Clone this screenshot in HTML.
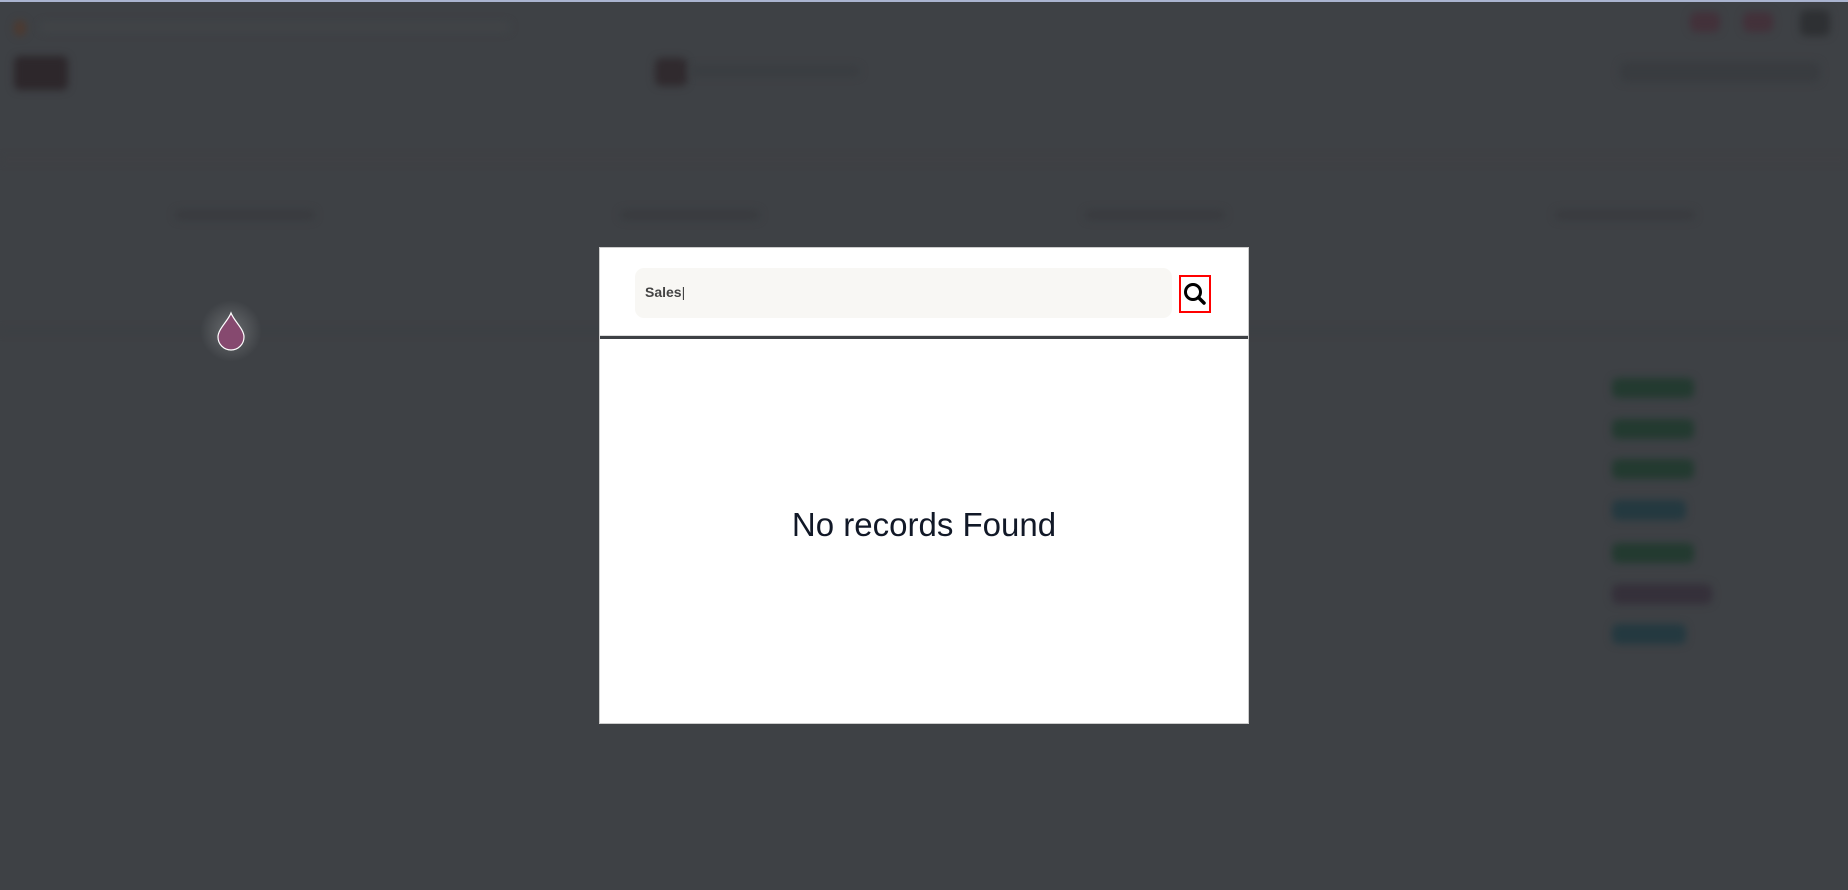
<!DOCTYPE html>
<html><head><meta charset="utf-8"><style>
*{margin:0;padding:0;box-sizing:border-box}
html,body{width:1848px;height:890px;overflow:hidden;background:#3e4145;font-family:"Liberation Sans",sans-serif;position:relative}
.topline{position:absolute;left:0;top:0;width:1848px;height:2px;background:#aab4d0}
.b{position:absolute;filter:blur(4px);border-radius:6px}
.modal{position:absolute;left:599px;top:247px;width:650px;height:477px;background:#fff;border:1px solid #ccc}
.hdr{position:absolute;left:0;top:0;width:648px;height:88px;border-bottom:1px solid #ddd}
.sep{position:absolute;left:0;top:88px;width:648px;height:3px;background:#3e4145}
.inp{position:absolute;left:35px;top:20px;width:537px;height:50px;background:#f8f7f4;border-radius:9px;font-weight:bold;font-size:14px;color:#444;padding:16px 0 0 10px}
.sb{position:absolute;left:579px;top:27px;width:32px;height:38px;border:2px solid #f00}
.msg{position:absolute;left:0;top:258px;width:648px;text-align:center;font-size:33px;color:#111827}
</style></head><body>
<div class="topline"></div>
<div class="b" style="left:14px;top:20px;width:12px;height:16px;background:#4d3a30"></div>
<div class="b" style="left:40px;top:22px;width:470px;height:10px;background:#414447"></div>
<div class="b" style="left:14px;top:56px;width:54px;height:34px;background:#2d272b"></div>
<div class="b" style="left:655px;top:58px;width:32px;height:28px;background:#302a2e"></div>
<div class="b" style="left:690px;top:66px;width:170px;height:10px;background:#3a3d41"></div>
<div class="b" style="left:1690px;top:12px;width:30px;height:20px;background:#43313a"></div>
<div class="b" style="left:1743px;top:12px;width:30px;height:20px;background:#43313a"></div>
<div class="b" style="left:1800px;top:10px;width:30px;height:26px;background:#2e3033"></div>
<div class="b" style="left:1620px;top:62px;width:200px;height:20px;background:#393c40"></div>
<div class="b" style="left:0px;top:158px;width:1848px;height:3px;background:#424144"></div>
<div class="b" style="left:175px;top:210px;width:140px;height:10px;background:#393b3f"></div>
<div class="b" style="left:620px;top:210px;width:140px;height:10px;background:#393b3f"></div>
<div class="b" style="left:1085px;top:210px;width:140px;height:10px;background:#393b3f"></div>
<div class="b" style="left:1555px;top:210px;width:140px;height:10px;background:#393b3f"></div>
<div class="b" style="left:0px;top:330px;width:1848px;height:2px;background:#3a3d41"></div>
<div style="position:absolute;left:200px;top:300px;width:62px;height:62px;border-radius:50%;background:radial-gradient(circle,#6a6d70 0%,rgba(62,65,69,0) 70%)"></div>
<svg style="position:absolute;left:216px;top:311px" width="30" height="40" viewBox="0 0 30 40"><path d="M15 2 C12 10 2 18 2 26 A13 13 0 0 0 28 26 C28 18 18 10 15 2Z" fill="#86496f" stroke="#fff" stroke-width="1.2"/></svg>
<div class="b" style="left:1612px;top:378px;width:82px;height:20px;background:#233a30"></div>
<div class="b" style="left:1612px;top:419px;width:82px;height:20px;background:#233a30"></div>
<div class="b" style="left:1612px;top:459px;width:82px;height:20px;background:#233a30"></div>
<div class="b" style="left:1612px;top:500px;width:74px;height:20px;background:#243940"></div>
<div class="b" style="left:1612px;top:543px;width:82px;height:20px;background:#233a30"></div>
<div class="b" style="left:1612px;top:584px;width:100px;height:20px;background:#35303a"></div>
<div class="b" style="left:1612px;top:624px;width:74px;height:20px;background:#243940"></div>
<div class="modal">
 <div class="hdr">
  <div class="inp">Sales<span style="font-weight:normal">|</span></div>
  <div class="sb"><svg width="28" height="34" viewBox="0 0 28 34"><circle cx="12" cy="15" r="7.5" fill="none" stroke="#000" stroke-width="3"/><path d="M17.5 20.5 L23 26" stroke="#000" stroke-width="3.5" stroke-linecap="round"/></svg></div>
 </div>
 <div class="sep"></div>
 <div class="msg">No records Found</div>
</div>
</body></html>
